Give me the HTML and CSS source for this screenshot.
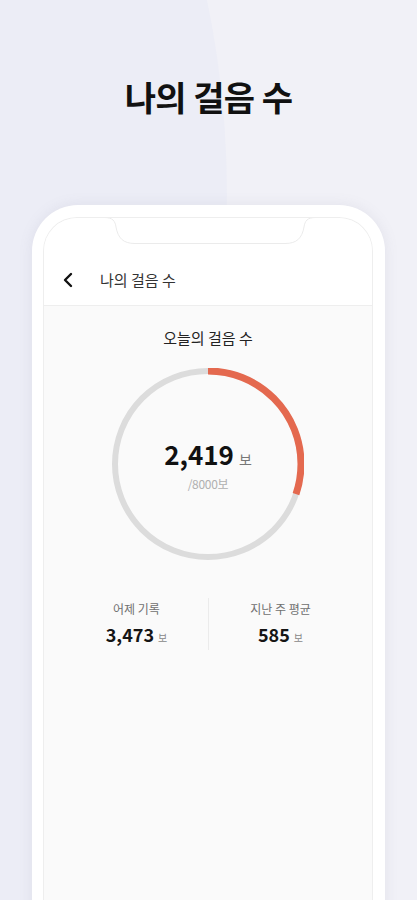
FILE: index.html
```html
<!DOCTYPE html>
<html>
    <head>
        <meta charset="utf-8">
        <title>나의 걸음 수</title>
        <link rel="stylesheet" href="styles.css">
    </head>
    <body>
        <div class="page">
            <h1 class="headline">나의 걸음 수</h1>

            <div class="phone">
                <div class="screen">
                    <svg class="notch" width="212" height="28" viewBox="0 0 212 28">
                        <path d="M0 0.5 C9 0.5 11 4 12 10 C14 21 19 26.5 31 26.5 L181 26.5 C193 26.5 198 21 200 10 C201 4 203 0.5 212 0.5" fill="#fff" stroke="#ebebeb" stroke-width="1"/>
                    </svg>

                    <div class="appbar">
                        <svg class="back" width="12" height="16" viewBox="0 0 12 16">
                            <path d="M9 2 L3 8 L9 14" fill="none" stroke="#111" stroke-width="2.4" stroke-linecap="round" stroke-linejoin="round"/>
                        </svg>
                        <span class="appbar-title">나의 걸음 수</span>
                    </div>

                    <div class="content">
                        <p class="today">오늘의 걸음 수</p>

                        <div class="ring">
                            <svg width="192" height="192" viewBox="0 0 192 192">
                                <circle cx="96" cy="96" r="93" fill="none" stroke="#dcdcdc" stroke-width="6"/>
                                <circle cx="96" cy="96" r="93" fill="none" stroke="#e4694f" stroke-width="7"
                                        stroke-dasharray="176.5 584.3" transform="rotate(-90 96 96)"/>
                            </svg>
                            <div class="ring-text">
                                <div class="steps"><b>2,419</b><span>보</span></div>
                                <div class="goal">/8000보</div>
                            </div>
                        </div>

                        <div class="stats">
                            <div class="stat">
                                <div class="stat-label">어제 기록</div>
                                <div class="stat-value"><b>3,473</b><span>보</span></div>
                            </div>
                            <div class="stat">
                                <div class="stat-label">지난 주 평균</div>
                                <div class="stat-value"><b>585</b><span>보</span></div>
                            </div>
                        </div>
                    </div>
                </div>
            </div>
        </div>
    </body>
</html>
```

FILE: styles.css
```css
html, body {
    margin: 0;
    padding: 0;
}

body {
    font-family: "Noto Sans CJK KR", "Noto Sans", sans-serif;
    background: #f1f1f7;
    height: 900px;
    overflow: hidden;
}

.page {
    position: relative;
    height: 900px;
    overflow: hidden;
}

/* darker soft blob on the left half of the backdrop */
.page:before {
    content: "";
    position: absolute;
    left: -783px;
    top: -505px;
    width: 1010px;
    height: 1400px;
    border-radius: 50%;
    background: #ecedf6;
}

/* keeps the far left strip dark below the blob */
.page:after {
    content: "";
    position: absolute;
    left: 0;
    top: 600px;
    width: 60px;
    height: 300px;
    background: #ecedf6;
}

.headline {
    position: relative;
    margin: 0;
    padding-top: 75px;
    height: 130px;
    box-sizing: border-box;
    text-align: center;
    font-size: 34px;
    font-weight: 700;
    letter-spacing: -0.6px;
    color: #111;
    line-height: 44px;
}

.phone {
    position: relative;
    z-index: 1;
    margin: 75px 0 0 32px;
    width: 353px;
    height: 760px;
    box-sizing: border-box;
    padding: 12px 12px 0 11px;
    background: #fff;
    border-radius: 46px 46px 0 0;
    box-shadow: 0 0 14px rgba(120, 124, 150, 0.12);
}

.screen {
    position: relative;
    height: 100%;
    border: 1px solid #eeeeee;
    border-bottom: 0;
    border-radius: 34px 34px 0 0;
    overflow: hidden;
    background: #fafafa;
}

.notch {
    position: absolute;
    top: -1px;
    left: 60px;
    display: block;
}

.appbar {
    display: flex;
    align-items: center;
    height: 88px;
    padding: 36px 0 0 18px;
    box-sizing: border-box;
    background: #fff;
    border-bottom: 1px solid #eeeeee;
}

.back {
    display: block;
}

.appbar-title {
    margin-left: 26px;
    font-size: 15px;
    color: #333;
}

.content {
    display: flex;
    flex-direction: column;
    align-items: center;
}

.today {
    margin: 21px 0 0;
    font-size: 15px;
    line-height: 22px;
    color: #222;
}

.ring {
    position: relative;
    margin-top: 19px;
    width: 192px;
    height: 192px;
}

.ring svg {
    display: block;
}

.ring-text {
    position: absolute;
    left: 0;
    top: 0;
    width: 100%;
    height: 100%;
    display: flex;
    flex-direction: column;
    align-items: center;
    justify-content: center;
    padding-top: 1px;
    box-sizing: border-box;
}

.steps {
    display: flex;
    align-items: baseline;
    line-height: 34px;
}

.steps b {
    font-size: 26px;
    font-weight: 700;
    color: #111;
}

.steps span {
    margin-left: 5px;
    font-size: 14px;
    color: #777;
}

.goal {
    font-size: 12px;
    line-height: 16px;
    color: #b0b0b0;
    letter-spacing: -0.3px;
}

.stats {
    display: flex;
    align-self: stretch;
    margin: 38px 20px 0 21px;
}

.stat {
    flex: 1;
    text-align: center;
    padding: 2px 0 0;
}

.stat + .stat {
    border-left: 1px solid #ebebeb;
}

.stat-label {
    font-size: 12px;
    line-height: 18px;
    color: #707070;
}

.stat-value {
    margin-top: 4px;
    display: flex;
    justify-content: center;
    align-items: baseline;
    line-height: 24px;
}

.stat-value b {
    font-size: 18px;
    font-weight: 700;
    color: #151515;
}

.stat-value span {
    margin-left: 4px;
    font-size: 10px;
    color: #888;
}
```
